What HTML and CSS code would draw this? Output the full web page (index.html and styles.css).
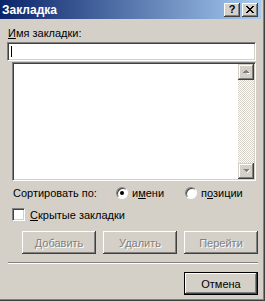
FILE: index.html
```html
<!DOCTYPE html>
<html lang="ru">
<head>
    <meta charset="UTF-8">
    <title>Закладка</title>
    <link rel="stylesheet" href="styles.css">
</head>
<body>
    <div class="window">
        <div class="titlebar">
            <span class="title">Закладка</span>
            <div class="caption-buttons">
                <span class="cap-btn help">?</span>
                <span class="cap-btn close">
                    <svg width="8" height="7" viewBox="0 0 8 7">
                        <path d="M0 0h2v1h-2zM6 0h2v1h-2zM1 1h2v1h-2zM5 1h2v1h-2zM2 2h4v1h-4zM3 3h2v1h-2zM2 4h4v1h-4zM1 5h2v1h-2zM5 5h2v1h-2zM0 6h2v1h-2zM6 6h2v1h-2z" fill="#000"/>
                    </svg>
                </span>
            </div>
        </div>

        <div class="dialog">
            <label class="field-label"><u>И</u>мя закладки:</label>
            <div class="edit"><span class="caret"></span></div>

            <div class="listbox">
                <div class="list-area"></div>
                <div class="scrollbar">
                    <div class="scroll-btn">
                        <svg width="7" height="4" viewBox="0 0 7 4">
                            <path d="M4 1h1v1h1v1h1v1h-3z" fill="#fff"/>
                            <path d="M3 0h1v1h1v1h1v1h-6v-1h1v-1h1z" fill="#808080"/>
                        </svg>
                    </div>
                    <div class="scroll-track"></div>
                    <div class="scroll-btn">
                        <svg width="7" height="4" viewBox="0 0 7 4">
                            <path d="M6 1h1v1h-1v1h-1v1h-1v-1h1v-1h1z" fill="#fff"/>
                            <path d="M0 0h6v1h-1v1h-1v1h-1v-1h-1v-1h-1z" fill="#808080"/>
                        </svg>
                    </div>
                </div>
            </div>

            <div class="sort-row">
                <span class="sort-label">Сортировать по:</span>
                <span class="option first"><span class="radio checked"></span><span>и<u>м</u>ени</span></span>
                <span class="option"><span class="radio"></span><span>п<u>о</u>зиции</span></span>
            </div>

            <div class="check-row">
                <span class="checkbox"></span>
                <span><u>С</u>крытые закладки</span>
            </div>

            <div class="button-row">
                <button class="btn" disabled>Добавить</button>
                <button class="btn" disabled>Удалить</button>
                <button class="btn" disabled>Перейти</button>
            </div>

            <div class="separator"></div>

            <div class="footer">
                <button class="btn default">Отмена</button>
            </div>
        </div>
    </div>
</body>
</html>
```

FILE: styles.css
```css
body {
    margin: 0;
    font-family: "Liberation Sans", Arial, sans-serif;
    font-size: 11px;
    color: #000;
    background-color: #d4d0c8;
}

.window {
    width: 265px;
    height: 301px;
    box-sizing: border-box;
    padding-right: 4px;
    background-color: #d4d0c8;
    box-shadow: inset -1px -1px #404040, inset -2px -2px #808080;
    overflow: hidden;
}

u {
    text-decoration: underline;
    text-underline-offset: 1px;
}

/* Title bar */
.titlebar {
    height: 19px;
    display: flex;
    align-items: center;
    justify-content: space-between;
    background: linear-gradient(to right, #0a246a, #a6caf0);
}

.title {
    padding-left: 2px;
    color: #fff;
    font-weight: bold;
    font-size: 12px;
}

.caption-buttons {
    display: flex;
    gap: 2px;
    margin-right: 3px;
}

.cap-btn {
    width: 16px;
    height: 14px;
    box-sizing: border-box;
    display: flex;
    align-items: center;
    justify-content: center;
    background-color: #d4d0c8;
    box-shadow: inset -1px -1px #404040, inset 1px 1px #fff, inset -2px -2px #808080;
}

.help {
    font-weight: bold;
    font-size: 11px;
    line-height: 14px;
    padding-bottom: 1px;
}

/* Dialog body */
.dialog {
    display: flex;
    flex-direction: column;
    align-items: flex-start;
}

.field-label {
    margin: 8px 0 0 8px;
    height: 13px;
    line-height: 13px;
}

.edit,
.listbox,
.checkbox {
    box-sizing: border-box;
    background-color: #fff;
    border: 1px solid;
    border-color: #808080 #fff #fff #808080;
    box-shadow: inset 1px 1px #404040, inset -1px -1px #d4d0c8;
}

.edit {
    margin: 2px 0 0 7px;
    width: 249px;
    height: 19px;
    padding: 3px 0 0 3px;
}

.caret {
    display: block;
    width: 1px;
    height: 11px;
    background-color: #000;
}

.listbox {
    margin: 1px 0 0 12px;
    width: 244px;
    height: 119px;
    padding: 1px;
    display: flex;
}

.list-area {
    flex: 1;
}

.scrollbar {
    width: 16px;
    display: flex;
    flex-direction: column;
}

.scroll-btn {
    height: 16px;
    display: flex;
    align-items: center;
    justify-content: center;
    background-color: #d4d0c8;
    box-shadow: inset -1px -1px #404040, inset 1px 1px #d4d0c8, inset -2px -2px #808080, inset 2px 2px #fff;
}

.scroll-track {
    flex: 1;
    background: repeating-conic-gradient(#fff 0 25%, #d4d0c8 0 50%) 0 0 / 2px 2px;
}

/* Sort options */
.sort-row {
    margin: 5px 0 0 13px;
    height: 14px;
    display: flex;
    align-items: center;
}

.sort-label {
    width: 103px;
}

.option {
    display: flex;
    align-items: center;
    gap: 4px;
}

.option.first {
    width: 69px;
}

.radio {
    width: 12px;
    height: 12px;
    box-sizing: border-box;
    border-radius: 50%;
    background-color: #fff;
    border: 1px solid;
    border-color: #808080 #fff #fff #808080;
    box-shadow: inset 1px 1px #404040;
    display: flex;
    align-items: center;
    justify-content: center;
}

.radio.checked::after {
    content: "";
    width: 4px;
    height: 4px;
    border-radius: 50%;
    background-color: #000;
}

.check-row {
    margin: 8px 0 0 12px;
    display: flex;
    align-items: center;
    gap: 5px;
}

.checkbox {
    width: 13px;
    height: 13px;
}

/* Buttons */
.button-row {
    margin: 10px 0 0 22px;
    display: flex;
    gap: 7px;
}

.btn {
    width: 74px;
    height: 23px;
    padding: 0;
    border: none;
    font-family: inherit;
    font-size: 11px;
    color: #000;
    background-color: #d4d0c8;
    box-shadow: inset -1px -1px #404040, inset 1px 1px #fff, inset -2px -2px #808080;
}

.btn:disabled {
    color: #808080;
    text-shadow: 1px 1px #fff;
}

.btn.default {
    border: 1px solid #000;
}

.separator {
    margin: 8px 0 0 8px;
    width: 250px;
    border-top: 1px solid #808080;
    border-bottom: 1px solid #fff;
    height: 0;
}

.footer {
    margin: 8px 0 0 184px;
}
```
